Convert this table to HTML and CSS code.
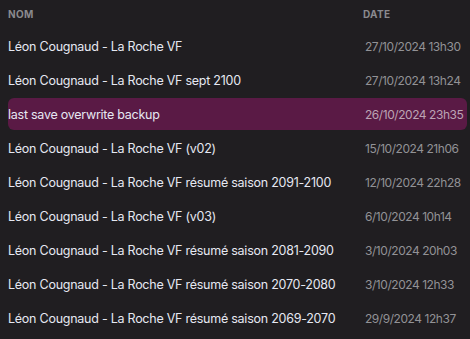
FILE: index.html
```html
<!DOCTYPE html>
<html lang="fr">
<head>
<meta charset="utf-8">
<link rel="stylesheet" href="styles.css">
</head>
<body>
<div class="list">
  <div class="head">
    <span class="col-name">NOM</span>
    <span class="col-date">DATE</span>
  </div>
  <div class="row"><span class="name">Léon Cougnaud - La Roche VF</span><span class="date">27/10/2024 13h30</span></div>
  <div class="row"><span class="name">Léon Cougnaud - La Roche VF sept 2100</span><span class="date">27/10/2024 13h24</span></div>
  <div class="row selected"><span class="name">last save overwrite backup</span><span class="date">26/10/2024 23h35</span></div>
  <div class="row"><span class="name">Léon Cougnaud - La Roche VF (v02)</span><span class="date">15/10/2024 21h06</span></div>
  <div class="row"><span class="name">Léon Cougnaud - La Roche VF résumé saison 2091-2100</span><span class="date">12/10/2024 22h28</span></div>
  <div class="row"><span class="name">Léon Cougnaud - La Roche VF (v03)</span><span class="date">6/10/2024 10h14</span></div>
  <div class="row"><span class="name">Léon Cougnaud - La Roche VF résumé saison 2081-2090</span><span class="date">3/10/2024 20h03</span></div>
  <div class="row"><span class="name">Léon Cougnaud - La Roche VF résumé saison 2070-2080</span><span class="date">3/10/2024 12h33</span></div>
  <div class="row"><span class="name">Léon Cougnaud - La Roche VF résumé saison 2069-2070</span><span class="date">29/9/2024 12h37</span></div>
</div>
</body>
</html>
```
FILE: styles.css
```css
html, body {
  margin: 0;
  padding: 0;
  background: #201e21;
}
body {
  font-family: Inter, "Noto Sans", sans-serif;
  width: 470px;
  height: 339px;
  overflow: hidden;
}
.list {
  display: flex;
  flex-direction: column;
  gap: 2px;
  padding: 0 3px 0 8px;
}
.head {
  display: grid;
  grid-template-columns: 355px 1fr;
  height: 28px;
  align-items: center;
  font-size: 10px;
  font-weight: 700;
  color: #8a8a8e;
  letter-spacing: 0.3px;
}
.row {
  display: grid;
  grid-template-columns: 357px 1fr;
  height: 32px;
  align-items: center;
  border-radius: 6px;
  white-space: nowrap;
}
.name {
  font-size: 12.5px;
  letter-spacing: -0.25px;
  color: #e6e8f2;
}
.date {
  font-size: 12px;
  letter-spacing: -0.45px;
  color: #929296;
}
.selected {
  background: #5a1a45;
}
.selected .date {
  color: #bca4b4;
}
```
